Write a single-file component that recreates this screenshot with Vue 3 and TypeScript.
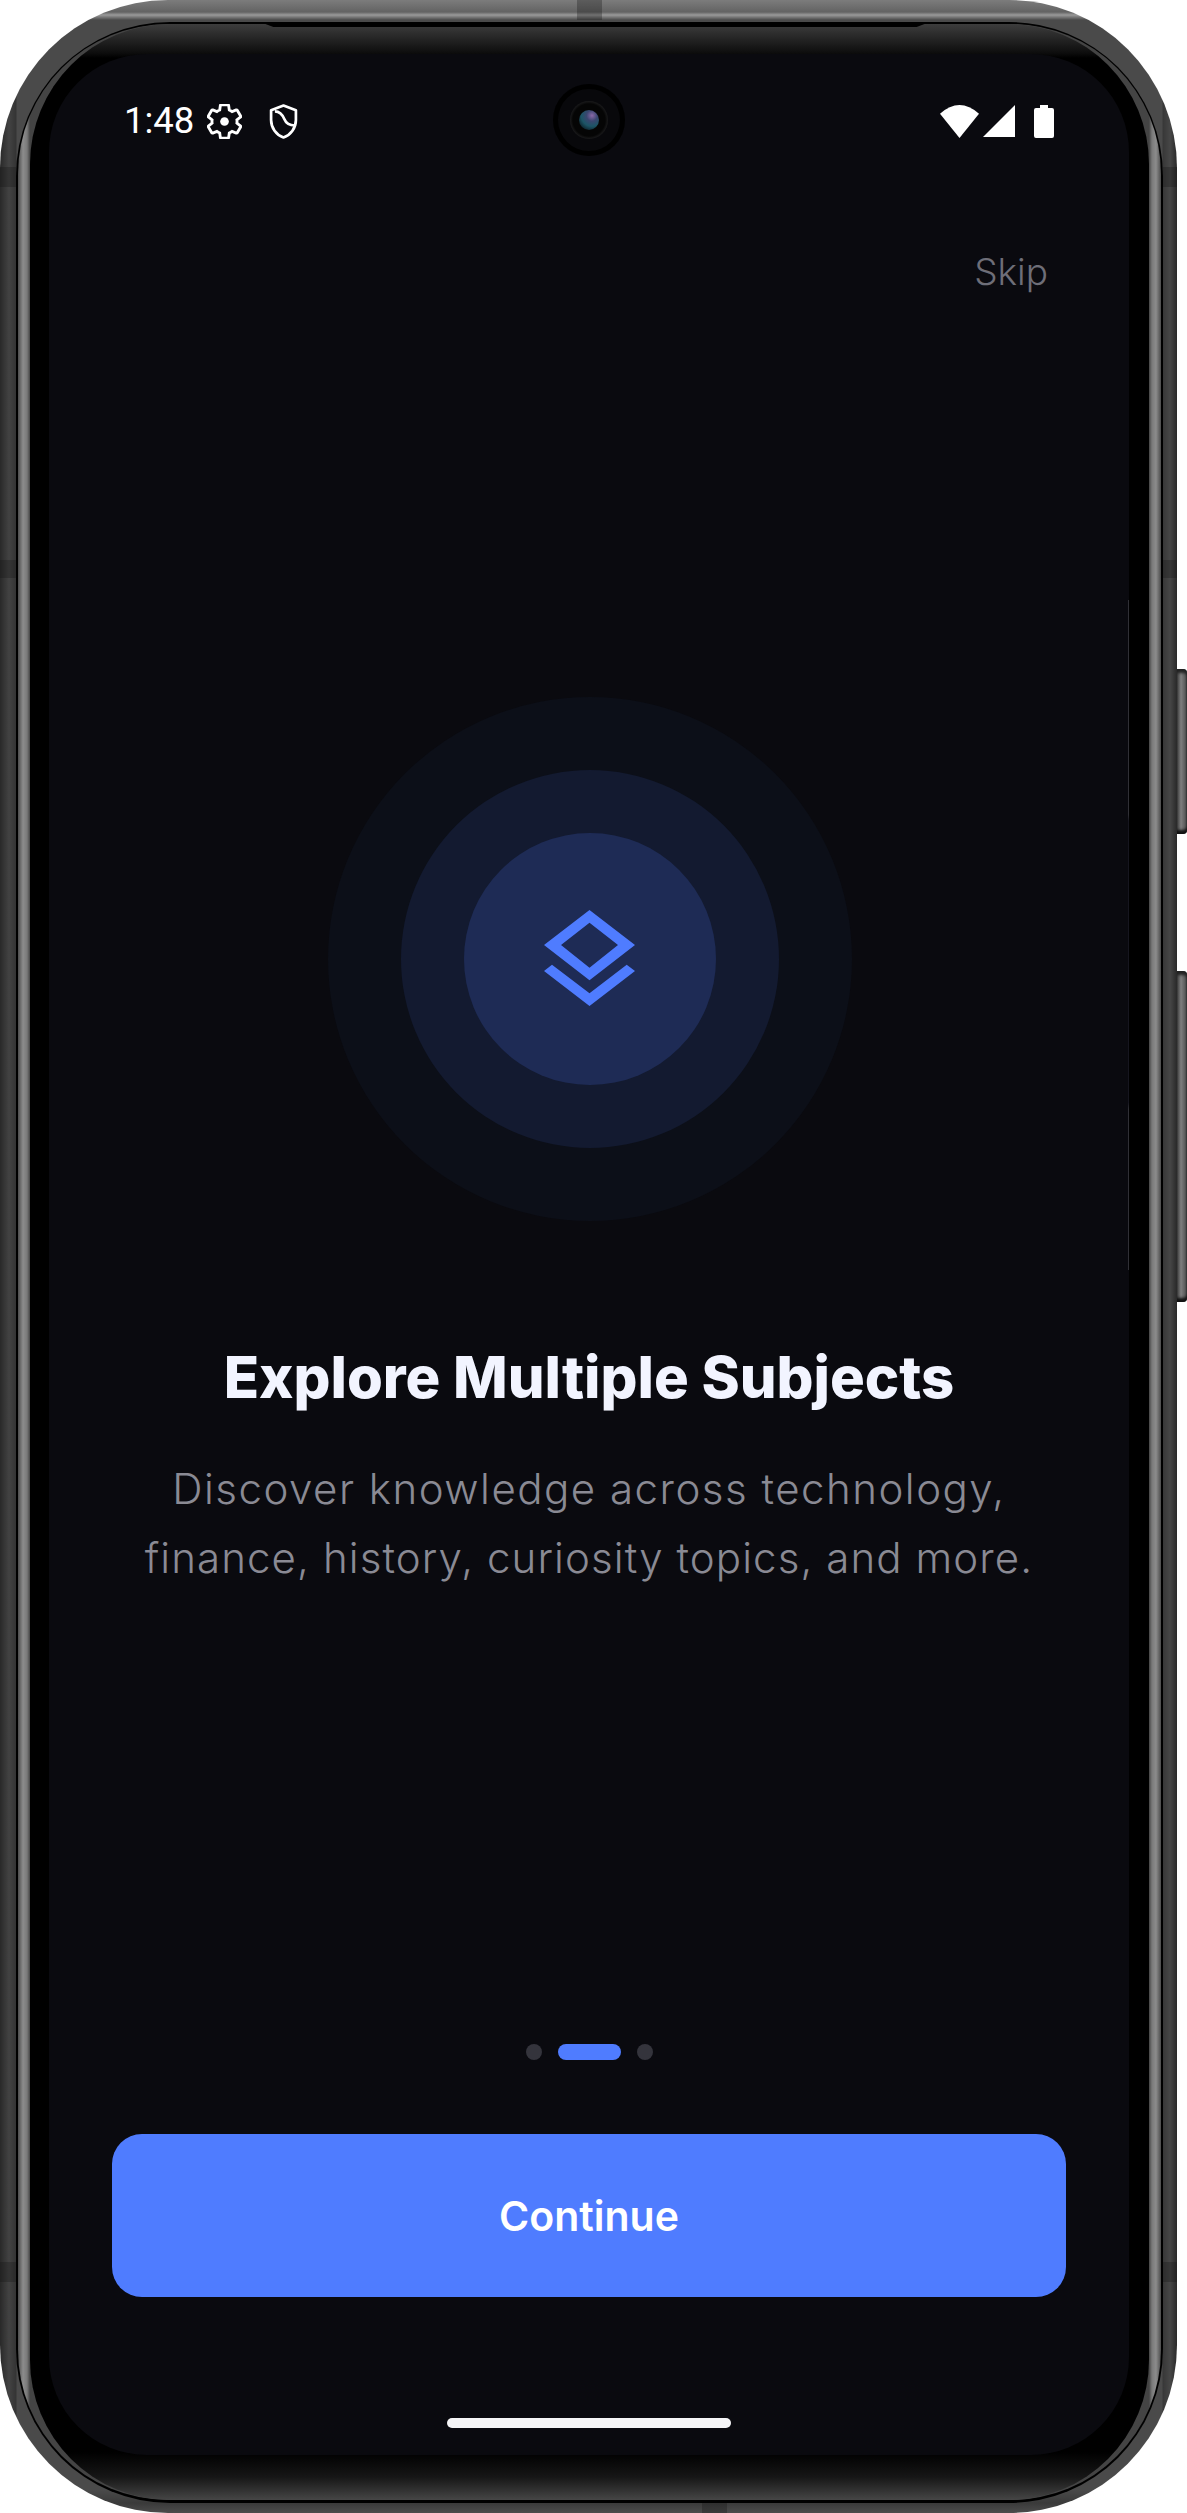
<script setup lang="ts">
const dots = [false, true, false]
const sideKeys = ['key-power', 'key-volume']
const bands = ['band-top', 'band-l1', 'band-l2', 'band-l3', 'band-r1', 'band-r2', 'band-r3', 'band-bottom']
</script>

<template>
  <div class="device">
    <span v-for="k in sideKeys" :key="k" class="key" :class="k" />
    <div class="phone">
      <span v-for="b in bands" :key="b" class="band" :class="b" />
      <div class="gap">
        <div class="rim">
          <div class="bezel">
            <span class="top-line" />
            <main class="screen">
              <div class="camera"><div class="camera-ring"><div class="lens" /></div></div>

              <header class="status">
                <span class="time">1:48</span>
                <svg class="gear" viewBox="1.5 1.5 21 21" fill="none" stroke="#fff" stroke-width="1.7">
                  <path d="M19.43 12.98c.04-.32.07-.64.07-.98 0-.34-.03-.66-.07-.98l2.11-1.65c.19-.15.24-.42.12-.64l-2-3.46c-.09-.16-.26-.25-.44-.25-.06 0-.12.01-.17.03l-2.49 1c-.52-.4-1.08-.73-1.69-.98l-.38-2.65C14.46 2.18 14.25 2 14 2h-4c-.25 0-.46.18-.49.42l-.38 2.65c-.61.25-1.17.59-1.69.98l-2.49-1c-.06-.02-.12-.03-.18-.03-.17 0-.34.09-.43.25l-2 3.46c-.13.22-.07.49.12.64l2.11 1.65c-.04.32-.07.65-.07.98 0 .33.03.66.07.98l-2.11 1.65c-.19.15-.24.42-.12.64l2 3.46c.09.16.26.25.44.25.06 0 .12-.01.17-.03l2.49-1c.52.4 1.08.73 1.69.98l.38 2.65c.03.24.24.42.49.42h4c.25 0 .46-.18.49-.42l.38-2.65c.61-.25 1.17-.59 1.69-.98l2.49 1c.06.02.12.03.18.03.17 0 .34-.09.43-.25l2-3.46c.12-.22.07-.49-.12-.64l-2.11-1.65z" />
                  <circle cx="12" cy="12" r="2.6" fill="#fff" stroke="none" />
                </svg>
                <svg class="shield" viewBox="3 1 18 22" fill="none" stroke="#fff" stroke-width="1.7" stroke-linejoin="round">
                  <path d="M12 2 4.2 4.9V11c0 5 3.2 9.4 7.8 11 4.6-1.6 7.8-6 7.8-11V4.9z" />
                  <path d="M6.6 5.6c3.4 0 4.9 2.4 5.9 4.9s3 4 6.6 4" />
                </svg>
                <span class="status-right">
                  <svg class="wifi" viewBox="0 0 39 33" fill="#fff"><path d="M0 8.7Q19.5-8.7 39 8.7L19.5 33z" /></svg>
                  <svg class="signal" viewBox="0 0 32 32" fill="#fff"><path d="M0 32 32 0v32z" /></svg>
                  <svg class="battery" viewBox="0 0 20 33" fill="#fff"><path d="M6 0h8v3h4a2 2 0 0 1 2 2v26a2 2 0 0 1-2 2H2a2 2 0 0 1-2-2V5a2 2 0 0 1 2-2h4z" /></svg>
                </span>
              </header>

              <div class="skip-row"><span class="skip">Skip</span></div>

              <section class="rings">
                <div class="ring-mid">
                  <div class="ring-inner">
                    <svg class="layers" viewBox="545 909 91 96" fill="#4f7cff">
                      <path fill-rule="evenodd" d="M590.5 909 636 944 590.5 979.3 545 944zM590.5 921.7 562 944l28.5 22.7L619 944z" />
                      <path d="M545 970l8-6.3 37.5 28.6 37.2-28.6 8.3 6.3-45.5 35z" />
                    </svg>
                  </div>
                </div>
              </section>

              <h1 class="title">Explore Multiple Subjects</h1>
              <p class="copy"><span class="copy-first">Discover knowledge across technology,</span><br />finance, history, curiosity topics, and more.</p>

              <footer class="foot">
                <div class="dots">
                  <span v-for="(on, i) in dots" :key="i" class="dot" :class="{ active: on }" />
                </div>
                <button class="cta" type="button">Continue</button>
                <div class="home" />
              </footer>
            </main>
          </div>
        </div>
      </div>
    </div>
  </div>
</template>

<style scoped>
.device {
  position: relative;
  width: 1187px;
  height: 2513px;
  font-family: Inter, 'Noto Sans', sans-serif;
}
.key {
  position: absolute;
  left: 1177px;
  width: 10px;
  border-radius: 0 4px 4px 0;
  background: linear-gradient(90deg, #3a3a3a, #7e7e7e 40%, #5c5c5c 80%, #333);
  box-shadow: inset 0 6px 3px -2px #222, inset 0 -6px 3px -2px #111;
}
.key-power { top: 669px; height: 165px; }
.key-volume { top: 971px; height: 331px; }

.phone {
  position: relative;
  box-sizing: border-box;
  width: 1177px;
  height: 2513px;
  padding: 22px 14px 10px 16px;
  border-radius: 168px;
  background:
    linear-gradient(90deg, rgba(0, 0, 0, 0.45) 0, rgba(0, 0, 0, 0.1) 9px, rgba(0, 0, 0, 0.3) 16px, transparent 17px, transparent 1162px, rgba(0, 0, 0, 0.25) 1163px, rgba(0, 0, 0, 0.05) 1170px, rgba(0, 0, 0, 0.45) 1177px),
    linear-gradient(180deg, #7c7c7c 0, #636363 12px, #9a9a9a 15px, #4a4a4a 20px, #4a4a4a 2490px, #3a3a3a 2503px, #4c4c4c 2513px);
}
.band {
  position: absolute;
  background: rgba(20, 20, 20, 0.3);
}
.band-top { left: 577px; top: 0; width: 25px; height: 20px; }
.band-bottom { left: 702px; top: 2503px; width: 25px; height: 10px; }
.band-l1 { left: 0; top: 167px; width: 16px; height: 20px; }
.band-l2 { left: 0; top: 560px; width: 16px; height: 18px; }
.band-l3 { left: 0; top: 2262px; width: 16px; height: 20px; }
.band-r1 { left: 1163px; top: 167px; width: 14px; height: 20px; }
.band-r2 { left: 1163px; top: 560px; width: 14px; height: 18px; }
.band-r3 { left: 1163px; top: 2262px; width: 14px; height: 20px; }

.gap {
  box-sizing: border-box;
  height: 100%;
  padding: 2px 2px 3px;
  border-radius: 154px;
  background: #000;
}
.rim {
  box-sizing: border-box;
  height: 100%;
  padding: 0 12px;
  border-radius: 150px;
  background: linear-gradient(90deg, #4c4c4c 0, #8c8c8c 5px, #7a7a7a 9px, #444 12px, #444 1131px, #7a7a7a 1134px, #8c8c8c 1138px, #4c4c4c 1143px);
}
.bezel {
  position: relative;
  box-sizing: border-box;
  height: 100%;
  padding: 30px 20px 45px 19px;
  border-radius: 140px;
  background: linear-gradient(180deg, #3c3c3c 0, #383838 3px, #0d0d0d 29px, #000 34px, #000 2428px, #161616 2453px, #464646 2476px);
}
.top-line {
  position: absolute;
  left: 230px;
  top: -2px;
  width: 670px;
  height: 5px;
  background: #000;
  clip-path: polygon(0 0, 100% 0, 98% 100%, 2% 100%);
}
.screen {
  position: relative;
  display: flex;
  flex-direction: column;
  height: 2401px;
  border-radius: 98px;
  background: #0a0a0f;
  overflow: hidden;
}
.screen::after {
  content: '';
  position: absolute;
  right: 0;
  top: 546px;
  width: 1px;
  height: 670px;
  background: linear-gradient(180deg, #303036 0, #303036 32%, #16161f 33%, #16161f 75%, #303036 76%, #303036 100%);
}

.camera {
  position: absolute;
  left: 504px;
  top: 30px;
  display: flex;
  align-items: center;
  justify-content: center;
  width: 72px;
  height: 72px;
  border-radius: 50%;
  background: #08080b;
  box-shadow: inset 0 0 0 5px #000;
}
.camera-ring {
  display: flex;
  align-items: center;
  justify-content: center;
  width: 38px;
  height: 38px;
  border-radius: 50%;
  background: radial-gradient(circle, #050505 60%, #2c2c2e 80%, #101012 100%);
}
.lens {
  width: 20px;
  height: 20px;
  border-radius: 50%;
  background: radial-gradient(circle at 65% 28%, #8a68a8 0, #3a4670 28%, #1c5566 55%, #070d14 92%);
}

.status {
  display: flex;
  align-items: center;
  height: 34px;
  margin-top: 50px;
  padding: 0 75px;
  color: #fff;
}
.time {
  font-family: Roboto, sans-serif;
  font-size: 36.5px;
  line-height: 34px;
  width: 83px;
}
.gear { width: 35px; height: 35px; }
.shield { width: 31px; height: 35px; margin-left: 26px; }
.status-right {
  display: flex;
  align-items: center;
  margin-left: auto;
}
.wifi { width: 39px; height: 33px; }
.signal { width: 32px; height: 32px; margin-left: 4px; }
.battery { width: 20px; height: 33px; margin-left: 19px; }

.skip-row {
  display: flex;
  justify-content: flex-end;
  margin-top: 109px;
  padding-right: 81px;
}
.skip {
  font-size: 37px;
  line-height: 50px;
  font-weight: 300;
  color: #6e6e78;
}

.rings {
  display: flex;
  align-items: center;
  justify-content: center;
  align-self: center;
  width: 524px;
  height: 524px;
  margin: 400px 0 0 2px;
  border-radius: 50%;
  background: #0c0f18;
}
.ring-mid {
  display: flex;
  align-items: center;
  justify-content: center;
  width: 378px;
  height: 378px;
  border-radius: 50%;
  background: #131a30;
}
.ring-inner {
  display: flex;
  align-items: center;
  justify-content: center;
  width: 252px;
  height: 252px;
  border-radius: 50%;
  background: #1e2b55;
}
.layers { width: 91px; height: 96px; margin: -2px 0 0 -1px; }

.title {
  margin: 120px 0 0;
  text-align: center;
  font-size: 58px;
  line-height: 72px;
  font-weight: 800;
  color: #f2f4ff;
}
.copy {
  margin: 41px 0 0;
  text-align: center;
  font-size: 42px;
  line-height: 69px;
  font-weight: 300;
  letter-spacing: 1.1px;
  color: #8a8a94;
}
.copy-first {
  letter-spacing: 1.5px;
}

.foot {
  display: flex;
  flex-direction: column;
  align-items: center;
  margin-top: auto;
  padding-bottom: 27px;
}
.dots {
  display: flex;
  gap: 16px;
}
.dot {
  width: 16px;
  height: 16px;
  border-radius: 8px;
  background: #34343c;
}
.dot.active {
  width: 63px;
  background: #4f7cff;
}
.cta {
  width: 954px;
  height: 163px;
  margin-top: 74px;
  border: 0;
  border-radius: 30px;
  background: #4f7cff;
  color: #fff;
  font-family: inherit;
  font-size: 41px;
  font-weight: 600;
}
.home {
  width: 284px;
  height: 10px;
  margin-top: 121px;
  border-radius: 5px;
  background: #f5f5f7;
}
</style>

<style>
body {
  background: #fff;
}
</style>
